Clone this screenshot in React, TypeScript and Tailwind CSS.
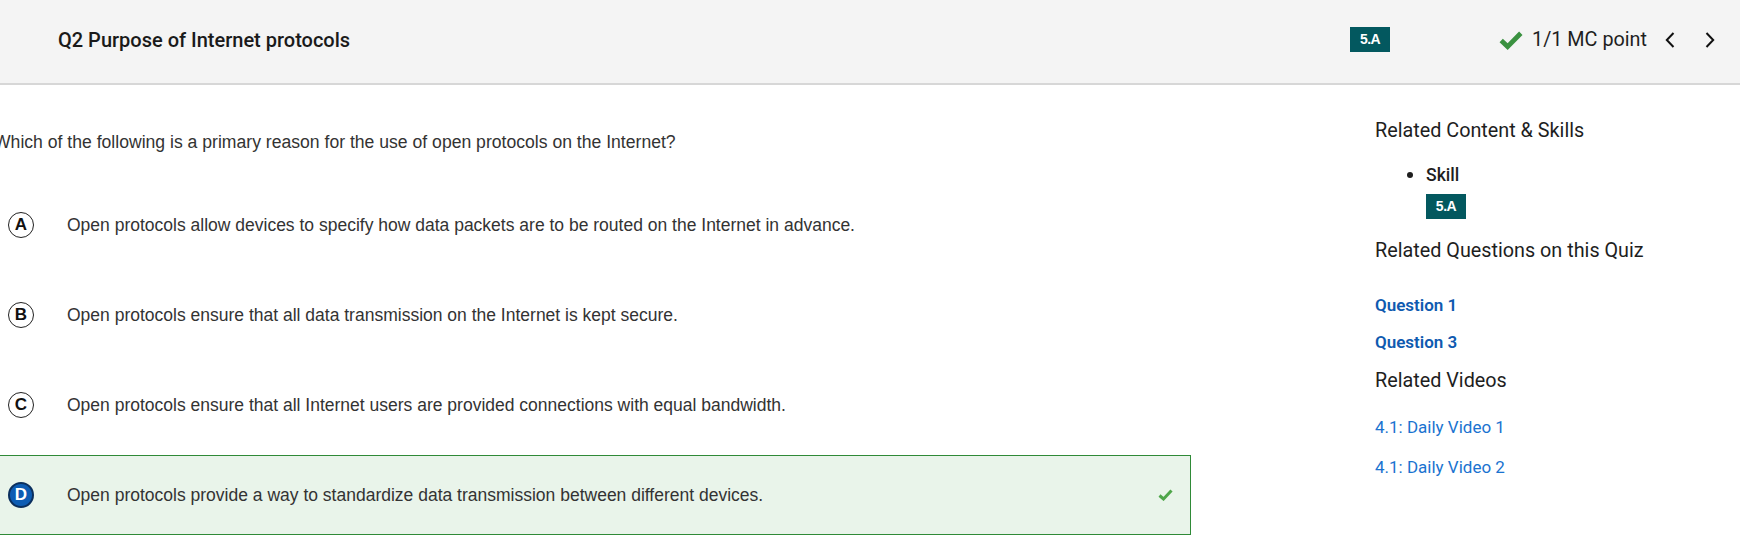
import React from "react";

const options = [
  { letter: "A", text: "Open protocols allow devices to specify how data packets are to be routed on the Internet in advance." },
  { letter: "B", text: "Open protocols ensure that all data transmission on the Internet is kept secure." },
  { letter: "C", text: "Open protocols ensure that all Internet users are provided connections with equal bandwidth." },
  { letter: "D", text: "Open protocols provide a way to standardize data transmission between different devices.", correct: true },
];

function Badge() {
  return (
    <span className="inline-flex items-center justify-center w-[40px] h-[25px] bg-[#03585f] text-white text-[14px] font-bold tracking-[-0.5px] font-['Liberation_Sans',Arial,sans-serif]">
      5.A
    </span>
  );
}

export default function App() {
  return (
    <div className="w-[1740px] h-[538px] overflow-hidden bg-white font-['Roboto','Liberation_Sans',sans-serif] text-[#1e1e1e]">
      {/* Header */}
      <div className="h-[85px] bg-[#f4f4f4] border-b-2 border-[#d7d7d7]">
        <div className="h-[79px] flex items-center pl-[58px] pr-[25px]">
          <div className="flex-1 text-[20px] font-medium text-[#1a1a1a]">Q2 Purpose of Internet protocols</div>
          <Badge />
          <div className="ml-[109px] flex items-center">
            <svg width="24" height="20" viewBox="0 0 24 20" className="shrink-0">
              <polyline points="2.2,10.5 8.6,16.6 21.8,3.2" fill="none" stroke="#3a9140" strokeWidth="4.8" strokeLinejoin="miter" />
            </svg>
            <span className="ml-[9px] text-[19.8px] text-[#1e1e1e]">1/1 MC point</span>
            <svg width="10" height="16" viewBox="0 0 10 16" className="ml-[18px] shrink-0">
              <polyline points="8.5,1 1.8,8 8.5,15" fill="none" stroke="#111" strokeWidth="2" />
            </svg>
            <svg width="10" height="16" viewBox="0 0 10 16" className="ml-[30px] shrink-0">
              <polyline points="1.5,1 8.2,8 1.5,15" fill="none" stroke="#111" strokeWidth="2" />
            </svg>
          </div>
        </div>
      </div>

      {/* Main */}
      <div className="flex">
        <div className="w-[1199px] ml-[-8px] shrink-0 font-['Liberation_Sans',Arial,sans-serif] text-[#333]">
          <div className="mt-[44px] h-[26px] leading-[26px] pl-[2px] text-[17.6px] whitespace-nowrap">
            Which of the following is a primary reason for the use of open protocols on the Internet?
          </div>
          <div className="mt-[30px] flex flex-col gap-[10px]">
            {options.map((o) => (
              <div
                key={o.letter}
                className={
                  o.correct
                    ? "h-[80px] flex items-center border border-[#2f8a37] bg-[#e9f4ea] pl-[15px] pr-[17px]"
                    : "h-[80px] flex items-center border border-transparent pl-[15px] pr-[17px]"
                }
              >
                <span
                  className={
                    o.correct
                      ? "w-[26px] h-[26px] rounded-full bg-[#0d5cb3] border-2 border-[#0b2f5e] text-white flex items-center justify-center text-[17px] font-bold shrink-0"
                      : "w-[26px] h-[26px] rounded-full bg-white border-[1.5px] border-[#222] text-[#111] flex items-center justify-center text-[17px] font-bold shrink-0"
                  }
                >
                  {o.letter}
                </span>
                <span className="ml-[33px] text-[17.5px] flex-1 whitespace-nowrap">{o.text}</span>
                {o.correct && (
                  <svg width="15" height="12" viewBox="0 0 15 12" className="shrink-0">
                    <polyline points="1.5,6.5 5.5,10 13.5,1.5" fill="none" stroke="#4fa64a" strokeWidth="3" />
                  </svg>
                )}
              </div>
            ))}
          </div>
        </div>

        <div className="ml-[184px] flex flex-col">
          <div className="mt-[32px] h-[28px] leading-[28px] text-[19.8px] text-[#1e1e1e]">Related Content &amp; Skills</div>
          <div className="mt-[18px] flex items-start">
            <span className="mt-[9px] ml-[32px] w-[6px] h-[6px] rounded-full bg-[#1e1e1e]" />
            <div className="ml-[13px] flex flex-col">
              <div className="h-[24px] leading-[24px] text-[17.6px] font-medium">Skill</div>
              <div className="mt-[7px]">
                <Badge />
              </div>
            </div>
          </div>
          <div className="mt-[18px] h-[28px] leading-[28px] text-[19.8px]">Related Questions on this Quiz</div>
          <div className="mt-[28px] h-[24px] leading-[24px] text-[17px] font-semibold text-[#0f5ab0]">Question 1</div>
          <div className="mt-[13px] h-[24px] leading-[24px] text-[17px] font-semibold text-[#0f5ab0]">Question 3</div>
          <div className="mt-[13px] h-[28px] leading-[28px] text-[19.8px]">Related Videos</div>
          <div className="mt-[20px] h-[24px] leading-[24px] text-[17px] text-[#1a73d0]">4.1: Daily Video 1</div>
          <div className="mt-[16px] h-[24px] leading-[24px] text-[17px] text-[#1a73d0]">4.1: Daily Video 2</div>
        </div>
      </div>
    </div>
  );
}
